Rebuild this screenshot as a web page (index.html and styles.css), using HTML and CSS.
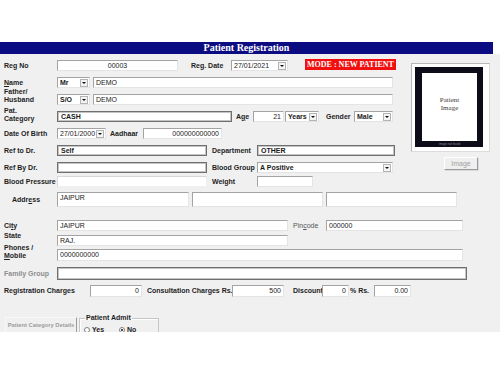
FILE: index.html
```html
<!DOCTYPE html>
<html>
<head>
<meta charset="utf-8">
<title>Patient Registration</title>
<link rel="stylesheet" href="styles.css">
</head>
<body>
<div class="window">
  <div class="titlebar">Patient Registration</div>
  <div class="panel">
    <div class="upper">
      <div class="form-col">
        <div class="row">
          <div class="lbl">Reg No</div>
          <div class="fld center f-regno">00003</div>
          <div class="lbl2 l-regdate">Reg. Date</div>
          <div class="fld combo f-date"><span class="val">27/01/2021</span><span class="drop"></span></div>
          <div class="mode">MODE : NEW PATIENT</div>
        </div>
        <div class="row">
          <div class="lbl"><u>N</u>ame</div>
          <div class="fld combo f-title"><span class="val b">Mr</span><span class="drop"></span></div>
          <div class="fld f-name">DEMO</div>
        </div>
        <div class="row">
          <div class="lbl up6">Father/<br>Husband</div>
          <div class="fld combo f-title"><span class="val b">S/O</span><span class="drop"></span></div>
          <div class="fld f-name">DEMO</div>
        </div>
        <div class="row">
          <div class="lbl up4">Pat.<br>Category</div>
          <div class="fld thick b f-cash">CASH</div>
          <div class="lbl2 l-age">A<u>g</u>e</div>
          <div class="fld right f-age">21</div>
          <div class="fld combo f-years"><span class="val b">Years</span><span class="drop"></span></div>
          <div class="lbl2 l-gender">Gender</div>
          <div class="fld combo f-gender"><span class="val b">Male</span><span class="drop"></span></div>
        </div>
        <div class="row">
          <div class="lbl">Date Of Birth</div>
          <div class="fld combo f-dob"><span class="val">27/01/2000</span><span class="drop"></span></div>
          <div class="lbl2 l-aadhaar">Aadhaar</div>
          <div class="fld right f-aadhaar">000000000000</div>
        </div>
        <div class="row">
          <div class="lbl">Ref to Dr.</div>
          <div class="fld thick b f-ref">Self</div>
          <div class="lbl2 l-side">Department</div>
          <div class="fld thick b f-dept">OTHER</div>
        </div>
        <div class="row">
          <div class="lbl">Ref By Dr.</div>
          <div class="fld thick f-ref"></div>
          <div class="lbl2 l-side">Blood Group</div>
          <div class="fld combo f-blood"><span class="val b">A Positive</span><span class="drop"></span></div>
        </div>
        <div class="row tight">
          <div class="lbl">Blood Pressure</div>
          <div class="fld flat f-ref"></div>
          <div class="lbl2 l-side">Weight</div>
          <div class="fld f-weight"></div>
        </div>
      </div>
      <div class="img-col">
        <div class="photo-frame">
          <div class="photo-black">
            <div class="photo-white">Patient<br>Image</div>
            <div class="photo-caption">image not found</div>
          </div>
        </div>
        <div class="img-btn">Image</div>
      </div>
    </div>

    <div class="row r-address">
      <div class="lbl l-indent">Addr<u>e</u>ss</div>
      <div class="fld top f-addr">JAIPUR</div>
      <div class="fld top f-addr gap3"></div>
      <div class="fld top f-addr gap3"></div>
    </div>
    <div class="row r-city">
      <div class="lbl">Ci<u>t</u>y</div>
      <div class="fld f-city">JAIPUR</div>
      <div class="lbl2 plain l-pin">Pin<u>c</u>ode</div>
      <div class="fld f-pin">000000</div>
    </div>
    <div class="row r-state">
      <div class="lbl up3">State</div>
      <div class="fld f-city">RAJ.</div>
    </div>
    <div class="row r-phone">
      <div class="lbl up5">Phones /<br><u>M</u>obile</div>
      <div class="fld f-phone">0000000000</div>
    </div>
    <div class="row r-family">
      <div class="lbl grey">Family Group</div>
      <div class="fld thick f-family"></div>
    </div>
    <div class="row r-charges">
      <div class="lbl l-regch">Registration Charges</div>
      <div class="fld right top f-regch">0</div>
      <div class="lbl2 l-consult">Consultation Charges Rs.</div>
      <div class="fld right top f-consult">500</div>
      <div class="lbl2 l-disc">Discount</div>
      <div class="fld right top f-disc">0</div>
      <div class="lbl2 l-pct">% Rs.</div>
      <div class="fld right top f-amt">0.00</div>
    </div>
    <div class="bottom">
      <div class="cat-btn">Patient Category Details</div>
      <fieldset class="admit">
        <legend>Patient Admit</legend>
        <div class="radios">
          <span class="radio"></span><span class="rlbl">Yes</span>
          <span class="radio on"></span><span class="rlbl">No</span>
        </div>
      </fieldset>
    </div>
  </div>
</div>
</body>
</html>
```

FILE: styles.css
```css
html, body {
  margin: 0;
  background: #ffffff;
}
body {
  font-family: "Liberation Sans", Arial, sans-serif;
  font-size: 7px;
  color: #1e1e1e;
  width: 500px;
  height: 375px;
  overflow: hidden;
}
.window {
  padding-top: 42px;
}
.titlebar {
  width: 493px;
  height: 12px;
  background: #0b0b82;
  color: #ffffff;
  font: bold 10px/12px "Liberation Serif", "Times New Roman", serif;
  text-align: center;
}
.panel {
  box-sizing: border-box;
  height: 278px;
  background: #f0f0f0;
  padding: 6px 0 0 4px;
  overflow: hidden;
}
.upper {
  display: flex;
}
.form-col {
  width: 407px;
  flex: none;
}
.row {
  display: flex;
  align-items: center;
  height: 11px;
  margin-bottom: 6px;
}
.row.tight {
  margin-top: -3px;
  margin-bottom: 0;
}
.lbl {
  width: 53px;
  flex: none;
  font-weight: bold;
  line-height: 8px;
  white-space: nowrap;
}
.lbl.up6 { align-self: flex-start; margin-top: -6px; }
.lbl.up5 { align-self: flex-start; margin-top: -5px; }
.lbl.up4 { align-self: flex-start; margin-top: -4px; }
.lbl.up3 { align-self: flex-start; margin-top: -3px; }
.lbl.grey { color: #8e8e8e; }
.lbl.l-indent { box-sizing: border-box; padding-left: 8px; }
.lbl2 {
  flex: none;
  font-weight: bold;
  line-height: 8px;
  white-space: nowrap;
}
.lbl2.plain { font-weight: normal; color: #555555; }
u { text-decoration: underline; text-underline-offset: 1px; }

.fld {
  box-sizing: border-box;
  flex: none;
  height: 100%;
  display: flex;
  align-items: center;
  background: #ffffff;
  border: 1px solid;
  border-color: #a3a3a3 #e4e4e4 #e4e4e4 #a3a3a3;
  padding: 0 2px;
  line-height: 8px;
  white-space: nowrap;
  overflow: hidden;
  color: #1a1a1a;
}
.fld.thick {
  border: 1px solid #6f6f6f;
  box-shadow: inset 0 0 0 1px #c4c4c4;
  padding-left: 3px;
}
.fld.flat {
  border-color: #d8d8d8 #efefef #efefef #d8d8d8;
}
.fld.center { justify-content: center; }
.fld.right { justify-content: flex-end; }
.fld.top { align-items: flex-start; padding-top: 1px; }
.b, .fld.b { font-weight: bold; }

.combo {
  padding-right: 1px;
}
.combo .val {
  flex: 1;
  overflow: hidden;
}
.drop {
  position: relative;
  flex: none;
  width: 8px;
  height: 8px;
  box-sizing: border-box;
  background: #f4f4f4;
  border: 1px solid #b4b4b4;
}
.drop::after {
  content: "";
  position: absolute;
  left: 1px;
  top: 2px;
  border-left: 2px solid transparent;
  border-right: 2px solid transparent;
  border-top: 2px solid #111111;
}

/* widths / horizontal placement */
.f-regno { width: 121px; }
.l-regdate { margin-left: 13px; width: 40px; }
.f-date { width: 57px; }
.mode {
  flex: none;
  align-self: flex-start;
  margin-top: -1px;
  margin-left: 17px;
  width: 91px;
  height: 11px;
  background: #f20f0f;
  color: #ffffff;
  font: bold 8px/11px "Liberation Serif", "Times New Roman", serif;
  text-align: center;
  white-space: nowrap;
}
.f-title { width: 33px; }
.f-name { margin-left: 3px; width: 300px; }
.f-cash { width: 175px; }
.l-age { margin-left: 4px; width: 17px; }
.f-age { width: 31px; }
.f-years { margin-left: 1px; width: 34px; }
.l-gender { margin-left: 7px; width: 28px; }
.f-gender { width: 39px; }
.f-dob { width: 49px; }
.l-aadhaar { margin-left: 4px; width: 33px; }
.f-aadhaar { width: 79px; }
.f-ref { width: 150px; }
.l-side { margin-left: 5px; width: 45px; }
.f-dept { width: 138px; }
.f-blood { width: 136px; }
.f-weight { width: 56px; }

/* image column */
.img-col {
  display: flex;
  flex-direction: column;
  flex: none;
}
.photo-frame {
  box-sizing: border-box;
  margin-top: 3px;
  width: 79px;
  height: 89px;
  background: #ffffff;
  border: 1px solid;
  border-color: #b8b8b8 #dcdcdc #dcdcdc #b8b8b8;
  padding: 3px 6px 4px 3px;
}
.photo-black {
  box-sizing: border-box;
  height: 100%;
  background: #0d0d1a;
  padding: 6px 6px 0 7px;
  display: flex;
  flex-direction: column;
}
.photo-white {
  height: 68px;
  background: #ffffff;
  box-sizing: border-box;
  padding-top: 23px;
  text-align: center;
  font: 7px/8px "Liberation Serif", "Times New Roman", serif;
  color: #3a3a3a;
}
.photo-caption {
  text-align: center;
  font-size: 3px;
  line-height: 6px;
  color: #8a8a8a;
  white-space: nowrap;
  overflow: hidden;
}
.img-btn {
  box-sizing: border-box;
  margin-top: 5px;
  margin-left: 33px;
  width: 34px;
  height: 13px;
  border: 1px solid;
  border-color: #ffffff #9a9a9a #9a9a9a #ffffff;
  box-shadow: 1px 1px 0 #dadada;
  background: #efefef;
  color: #a2a2a2;
  font-size: 7px;
  line-height: 11px;
  text-align: center;
}

/* lower rows */
.row.r-address { height: 15px; margin-top: 5px; margin-bottom: 0; align-items: stretch; }
.r-address .lbl { align-self: center; }
.f-addr { width: 132px; }
.f-addr.gap3 { margin-left: 3px; width: 131px; }
.row.r-city { margin-top: 13px; margin-bottom: 0; }
.f-city { width: 231px; }
.l-pin { margin-left: 5px; width: 33px; }
.f-pin { width: 137px; }
.row.r-state { margin-top: 4px; margin-bottom: 0; }
.row.r-phone { margin-top: 3px; margin-bottom: 0; height: 12px; }
.f-phone { width: 406px; }
.row.r-family { margin-top: 6px; margin-bottom: 0; height: 13px; }
.f-family { width: 410px; }
.row.r-charges { margin-top: 5px; margin-bottom: 0; height: 12px; }
.lbl.l-regch { width: 86px; }
.f-regch { width: 52px; }
.l-consult { margin-left: 5px; width: 85px; overflow: hidden; }
.f-consult { width: 52px; }
.l-disc { margin-left: 9px; width: 29px; }
.f-disc { width: 27px; }
.l-pct { margin-left: 1px; width: 24px; }
.f-amt { width: 37px; }

/* bottom area */
.bottom {
  display: flex;
  align-items: flex-start;
  margin-top: 17px;
}
.cat-btn {
  box-sizing: border-box;
  margin-top: 3px;
  margin-left: 1px;
  width: 72px;
  height: 24px;
  border: 1px solid;
  border-color: #f8f8f8 #9a9a9a #9a9a9a #f8f8f8;
  color: #9c9c9c;
  font-weight: bold;
  font-size: 5.8px;
  line-height: 7px;
  text-align: center;
  padding-top: 4px;
  white-space: nowrap;
}
.admit {
  margin: 0 0 0 2px;
  padding: 0 4px;
  width: 72px;
  box-sizing: border-box;
  height: 30px;
  border: 1px solid #c6c6c6;
  box-shadow: 1px 1px 0 #ffffff inset;
}
.admit legend {
  padding: 0 1px;
  margin-left: 1px;
  font-weight: bold;
  font-size: 7px;
  line-height: 8px;
  color: #1e1e1e;
}
.radios {
  display: flex;
  align-items: center;
  height: 9px;
  margin-top: 3px;
}
.radio {
  box-sizing: border-box;
  width: 6px;
  height: 6px;
  border-radius: 50%;
  border: 1px solid #808080;
  background: #ffffff;
  position: relative;
}
.radio.on::after {
  content: "";
  position: absolute;
  left: 1px;
  top: 1px;
  width: 2px;
  height: 2px;
  border-radius: 50%;
  background: #111111;
}
.rlbl {
  font-weight: bold;
  margin-left: 2px;
  width: 27px;
}
```
